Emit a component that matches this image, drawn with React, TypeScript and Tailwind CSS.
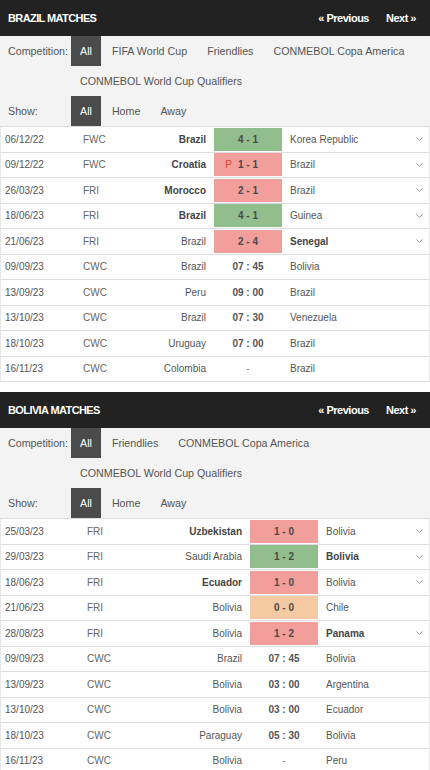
type Match = {
  date: string;
  comp: string;
  home: string;
  away: string;
  score?: string;
  time?: string;
  result?: 'w' | 'l' | 'd';
  bold?: 'home' | 'away';
  pen?: boolean;
};

interface SectionProps {
  title: string;
  comps: string[];
  matches: Match[];
  dateW: string;
  homeW: string;
}

const brazilMatches: Match[] = [
  { date: '06/12/22', comp: 'FWC', home: 'Brazil', away: 'Korea Republic', score: '4 - 1', result: 'w', bold: 'home' },
  { date: '09/12/22', comp: 'FWC', home: 'Croatia', away: 'Brazil', score: '1 - 1', result: 'l', bold: 'home', pen: true },
  { date: '26/03/23', comp: 'FRI', home: 'Morocco', away: 'Brazil', score: '2 - 1', result: 'l', bold: 'home' },
  { date: '18/06/23', comp: 'FRI', home: 'Brazil', away: 'Guinea', score: '4 - 1', result: 'w', bold: 'home' },
  { date: '21/06/23', comp: 'FRI', home: 'Brazil', away: 'Senegal', score: '2 - 4', result: 'l', bold: 'away' },
  { date: '09/09/23', comp: 'CWC', home: 'Brazil', away: 'Bolivia', time: '07 : 45' },
  { date: '13/09/23', comp: 'CWC', home: 'Peru', away: 'Brazil', time: '09 : 00' },
  { date: '13/10/23', comp: 'CWC', home: 'Brazil', away: 'Venezuela', time: '07 : 30' },
  { date: '18/10/23', comp: 'CWC', home: 'Uruguay', away: 'Brazil', time: '07 : 00' },
  { date: '16/11/23', comp: 'CWC', home: 'Colombia', away: 'Brazil' },
];

const boliviaMatches: Match[] = [
  { date: '25/03/23', comp: 'FRI', home: 'Uzbekistan', away: 'Bolivia', score: '1 - 0', result: 'l', bold: 'home' },
  { date: '29/03/23', comp: 'FRI', home: 'Saudi Arabia', away: 'Bolivia', score: '1 - 2', result: 'w', bold: 'away' },
  { date: '18/06/23', comp: 'FRI', home: 'Ecuador', away: 'Bolivia', score: '1 - 0', result: 'l', bold: 'home' },
  { date: '21/06/23', comp: 'FRI', home: 'Bolivia', away: 'Chile', score: '0 - 0', result: 'd' },
  { date: '28/08/23', comp: 'FRI', home: 'Bolivia', away: 'Panama', score: '1 - 2', result: 'l', bold: 'away' },
  { date: '09/09/23', comp: 'CWC', home: 'Brazil', away: 'Bolivia', time: '07 : 45' },
  { date: '13/09/23', comp: 'CWC', home: 'Bolivia', away: 'Argentina', time: '03 : 00' },
  { date: '13/10/23', comp: 'CWC', home: 'Bolivia', away: 'Ecuador', time: '03 : 00' },
  { date: '18/10/23', comp: 'CWC', home: 'Paraguay', away: 'Bolivia', time: '05 : 30' },
  { date: '16/11/23', comp: 'CWC', home: 'Bolivia', away: 'Peru' },
];

const boxColor = {
  w: 'bg-[#92bd8c]',
  l: 'bg-[#f29e9a]',
  d: 'bg-[#f5caa2]',
};

function Chevron() {
  return (
    <svg width="7" height="4" viewBox="0 0 7 4" fill="none">
      <polyline points="0.5,0.5 3.5,3.3 6.5,0.5" stroke="#999" strokeWidth="1" />
    </svg>
  );
}

function FilterItem({ label, active }: { label: string; active?: boolean }) {
  return (
    <span
      className={`h-[30px] px-[9px] flex items-center ${
        active ? 'bg-[#4b4b4b] text-white' : 'text-[#555]'
      }`}
    >
      {label}
    </span>
  );
}

function Section({ title, comps, matches, dateW, homeW }: SectionProps) {
  return (
    <div>
      {/* Header bar */}
      <div className="h-[36px] bg-[#222] flex items-center justify-between pl-[8px] pr-[14px] text-white text-[11px] font-bold">
        <span className="tracking-[-0.6px]">{title}</span>
        <div className="flex gap-[17px] tracking-[-0.5px]">
          <span>« Previous</span>
          <span>Next »</span>
        </div>
      </div>

      {/* Filters */}
      <div className="bg-[#f3f3f3] text-[10.7px]">
        <div className="flex">
          <span className="w-[71px] shrink-0 pl-[8px] h-[30px] flex items-center text-[#555]">Competition:</span>
          <div className="flex flex-wrap gap-x-[2px]">
            {comps.map((c, i) => (
              <FilterItem key={c} label={c} active={i === 0} />
            ))}
          </div>
        </div>
        <div className="flex">
          <span className="w-[71px] shrink-0 pl-[8px] h-[30px] flex items-center text-[#555]">Show:</span>
          <div className="flex gap-x-[2px]">
            <FilterItem label="All" active />
            <FilterItem label="Home" />
            <FilterItem label="Away" />
          </div>
        </div>
      </div>

      {/* Matches */}
      <div className="border-t border-[#dcdcdc] border-x border-x-[#e6e6e6] bg-white text-[10px] text-[#555]">
        {matches.map((m, i) => (
          <div key={i} className="h-[25.5px] flex items-center border-b border-[#dedede]">
            <span className={`${dateW} shrink-0 pl-[4px]`}>{m.date}</span>
            <span className="w-[60px] shrink-0 text-[#666]">{m.comp}</span>
            <span className={`${homeW} shrink-0 text-right whitespace-nowrap ${m.bold === 'home' ? 'font-bold text-[#444]' : ''}`}>
              {m.home}
            </span>
            <div
              className={`ml-[8px] w-[68px] h-[23px] shrink-0 flex items-center justify-center font-bold ${
                m.result ? `${boxColor[m.result]} text-[#4a4a4a]` : 'text-[#555]'
              }`}
            >
              {m.score ? (
                <span className="relative">
                  {m.pen && <span className="absolute right-full mr-[6px] font-normal text-[#e0403b]">P</span>}
                  {m.score}
                </span>
              ) : m.time ? (
                <span>{m.time}</span>
              ) : (
                <span className="font-normal text-[#888]">-</span>
              )}
            </div>
            <span className={`flex-1 pl-[8px] whitespace-nowrap ${m.bold === 'away' ? 'font-bold text-[#444]' : ''}`}>
              {m.away}
            </span>
            <span className="w-[7px] mr-[6px] flex items-center">
              {m.score && m.result !== 'd' ? <Chevron /> : null}
            </span>
          </div>
        ))}
      </div>
    </div>
  );
}

export default function App() {
  return (
    <div className="w-[430px] bg-white font-['Liberation_Sans',Arial,sans-serif]">
      <Section
        title="BRAZIL MATCHES"
        comps={['All', 'FIFA World Cup', 'Friendlies', 'CONMEBOL Copa America', 'CONMEBOL World Cup Qualifiers']}
        matches={brazilMatches}
        dateW="w-[82px]"
        homeW="w-[63px]"
      />
      <div className="h-[10px]" />
      <Section
        title="BOLIVIA MATCHES"
        comps={['All', 'Friendlies', 'CONMEBOL Copa America', 'CONMEBOL World Cup Qualifiers']}
        matches={boliviaMatches}
        dateW="w-[86px]"
        homeW="w-[95px]"
      />
    </div>
  );
}
